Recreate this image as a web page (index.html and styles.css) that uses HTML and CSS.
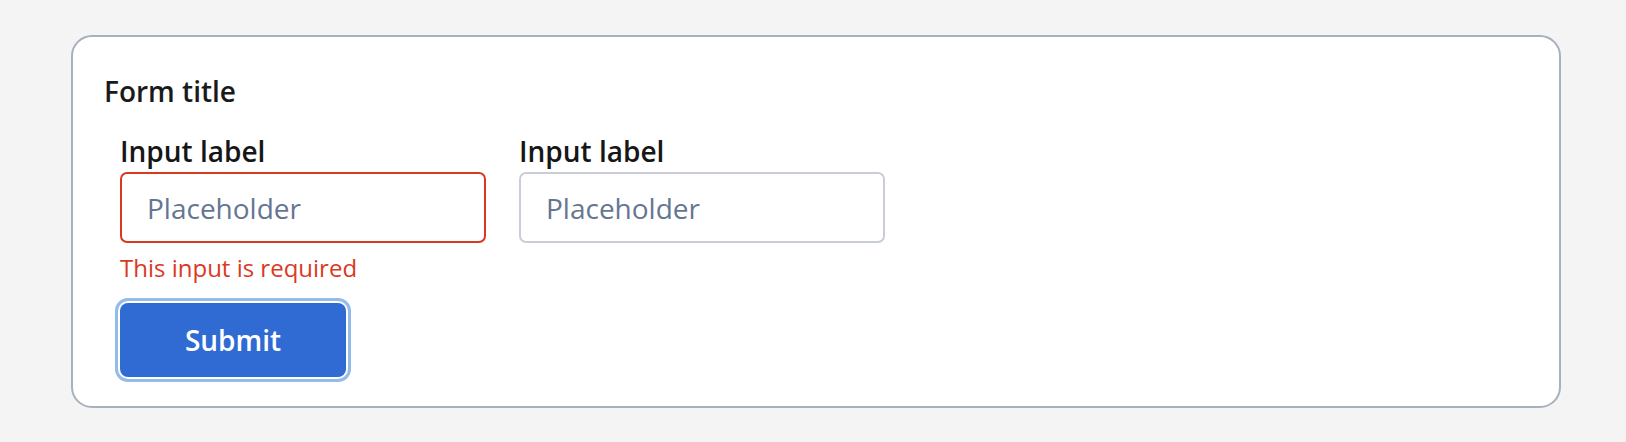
FILE: index.html
```html
<!DOCTYPE html>
<html lang="en">
<head>
<meta charset="utf-8">
<title>Form</title>
<link rel="stylesheet" href="styles.css">
</head>
<body>
<div class="page">
  <form class="card">
    <h2 class="form-title">Form title</h2>
    <div class="fields">
      <div class="field">
        <label class="label" for="a">Input label</label>
        <input id="a" class="input input-error" type="text" placeholder="Placeholder">
        <div class="error">This input is required</div>
      </div>
      <div class="field">
        <label class="label" for="b">Input label</label>
        <input id="b" class="input" type="text" placeholder="Placeholder">
      </div>
    </div>
    <div class="actions">
      <button type="button" class="btn">Submit</button>
    </div>
  </form>
</div>
</body>
</html>
```
FILE: styles.css
```css
html, body {
  margin: 0;
  padding: 0;
  background: #f4f4f4;
}
body {
  font-family: "Open Sans", "Noto Sans", sans-serif;
  color: #161616;
}
.page {
  padding: 35px 65px 34px 71px;
}
.card {
  display: flex;
  flex-direction: column;
  background: #ffffff;
  border: 2px solid #a7b0c0;
  border-radius: 21px;
  padding: 35px 31px 29px 31px;
}
.form-title {
  margin: 0;
  font-size: 28px;
  font-weight: 600;
  line-height: 38px;
  color: #1a1a1a;
}
.fields {
  display: flex;
  gap: 33px;
  margin-top: 22px;
  padding-left: 16px;
}
.field {
  display: flex;
  flex-direction: column;
  width: 366px;
}
.label {
  font-size: 28px;
  font-weight: 600;
  line-height: 38px;
  margin-bottom: 2px;
}
.input {
  box-sizing: border-box;
  height: 71px;
  width: 366px;
  margin: 0;
  padding: 0 25px;
  border: 2px solid #c9cdd6;
  border-radius: 7px;
  font-family: "Open Sans", "Noto Sans", sans-serif;
  font-size: 28px;
  color: #161616;
  background: #ffffff;
  outline: none;
}
.input::placeholder {
  color: #667690;
  opacity: 1;
}
.input-error {
  border-color: #d93a1f;
}
.error {
  margin-top: 8px;
  font-size: 24px;
  line-height: 33px;
  color: #d93a1f;
}
.actions {
  display: flex;
  padding-left: 16px;
  margin-top: 19px;
}
.btn {
  box-sizing: border-box;
  width: 226px;
  height: 74px;
  border: none;
  border-radius: 8px;
  background: #2f6bd3;
  color: #ffffff;
  font-family: "Open Sans", "Noto Sans", sans-serif;
  font-size: 28px;
  font-weight: 600;
  box-shadow: 0 0 0 2px #ffffff, 0 0 0 5px #93bbeb;
  cursor: pointer;
}
```
